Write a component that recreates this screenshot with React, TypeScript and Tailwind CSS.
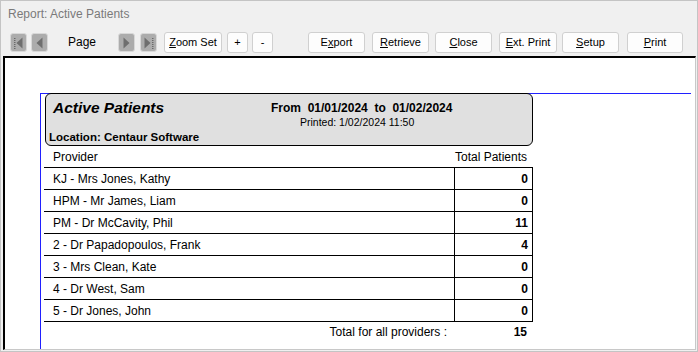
import React from "react";

type Row = { name: string; total: number };

const rows: Row[] = [
  { name: "KJ - Mrs Jones, Kathy", total: 0 },
  { name: "HPM - Mr James, Liam", total: 0 },
  { name: "PM - Dr McCavity, Phil", total: 11 },
  { name: "2 - Dr Papadopoulos, Frank", total: 4 },
  { name: "3 - Mrs Clean, Kate", total: 0 },
  { name: "4 - Dr West, Sam", total: 0 },
  { name: "5 - Dr Jones, John", total: 0 },
];

function DottedBar({ x }: { x: number }) {
  return (
    <g>
      {[4, 6, 8, 10, 12, 14].map((y) => (
        <rect key={y} x={x} y={y} width={1.5} height={1} fill="#6a6a6a" />
      ))}
    </g>
  );
}

function NavButton({ kind, className = "" }: { kind: "first" | "prev" | "next" | "last"; className?: string }) {
  return (
    <div
      className={`w-[17px] h-[19px] rounded-[3px] border border-[#d8d8d8] bg-[#acacac] flex items-center justify-center ${className}`}
    >
      <svg width="15" height="17" viewBox="0 0 15 17">
        {kind === "first" && (
          <>
            <DottedBar x={3} />
            <polygon points="11.5,3.5 11.5,14.5 5.5,9" fill="#6e6e6e" />
          </>
        )}
        {kind === "prev" && <polygon points="10.5,3.5 10.5,14.5 4.5,9" fill="#6e6e6e" />}
        {kind === "next" && <polygon points="4.5,3.5 4.5,14.5 10.5,9" fill="#6e6e6e" />}
        {kind === "last" && (
          <>
            <polygon points="3.5,3.5 3.5,14.5 9.5,9" fill="#6e6e6e" />
            <DottedBar x={11} />
          </>
        )}
      </svg>
    </div>
  );
}

function Btn({ children, className = "" }: { children: React.ReactNode; className?: string }) {
  return (
    <div
      className={`h-[21px] rounded-[3px] border border-[#d0d0d0] bg-[#fdfdfd] flex items-center justify-center text-[11px] text-black ${className}`}
    >
      {children}
    </div>
  );
}

export default function App() {
  const total = rows.reduce((s, r) => s + r.total, 0);
  return (
    <div
      className="w-[698px] h-[352px] bg-[#f0f0f0] border border-[#c4c4c4] flex flex-col overflow-hidden"
      style={{ fontFamily: '"Liberation Sans", Arial, sans-serif' }}
    >
      {/* title */}
      <div className="h-[26px] shrink-0 pl-[7px] flex items-center text-[12px] text-[#7a7a7a]">
        Report: Active Patients
      </div>

      {/* toolbar */}
      <div className="h-[29px] shrink-0 pt-[5px] flex items-start">
        <NavButton kind="first" className="ml-[9px] mt-[1px]" />
        <NavButton kind="prev" className="ml-[4px] mt-[1px]" />
        <span className="ml-[20px] w-[50px] text-[12px] leading-[21px] text-black">Page</span>
        <NavButton kind="next" className="mt-[1px]" />
        <NavButton kind="last" className="ml-[5px] mt-[1px]" />
        <Btn className="ml-[7px] w-[58px]">
          <span className="underline">Z</span>oom Set
        </Btn>
        <Btn className="ml-[5px] w-[21px]">+</Btn>
        <Btn className="ml-[4px] w-[21px]">-</Btn>
        <Btn className="ml-[35px] w-[57px]">
          E<span className="underline">x</span>port
        </Btn>
        <Btn className="ml-[7px] w-[57px]">
          <span className="underline">R</span>etrieve
        </Btn>
        <Btn className="ml-[6px] w-[57px]">
          <span className="underline">C</span>lose
        </Btn>
        <Btn className="ml-[7px] w-[58px]">
          <span className="underline">E</span>xt. Print
        </Btn>
        <Btn className="ml-[5px] w-[57px]">
          <span className="underline">S</span>etup
        </Btn>
        <Btn className="ml-[8px] w-[56px]">
          <span className="underline">P</span>rint
        </Btn>
      </div>

      {/* preview area */}
      <div className="flex-1 ml-[2px] mr-[1px] mb-[1px] bg-white border-t-2 border-l-2 border-t-black border-l-black border-r border-b border-r-[#c8c8c8] border-b-[#c8c8c8] pt-[35px] pl-[35px] flex flex-col min-h-0">
        <div className="flex-1 mr-[4px] border-l border-l-[#2020ff] flex flex-col text-black">
          <div className="h-px shrink-0 bg-[#2020ff]" />
          {/* header box */}
          <div className="-mt-[1px] ml-[4px] w-[488px] h-[53px] rounded-[6px] border border-black bg-[#e0e0e0] flex flex-col">
            <div className="flex pt-[5px] pl-[7px]">
              <span className="w-[218px] text-[15.5px] leading-[18px] font-bold italic">Active Patients</span>
              <div className="flex flex-col items-start mt-[2px]">
                <span className="text-[12px] leading-[14px] font-bold whitespace-pre">
                  {"From  01/01/2024  to  01/02/2024"}
                </span>
                <span className="ml-[29px] mt-[1px] text-[10.5px] leading-[13px]">Printed: 1/02/2024 11:50</span>
              </div>
            </div>
            <div className="mt-auto pl-[3px] pb-[1px] text-[11.5px] leading-[13px] font-bold">
              Location: Centaur Software
            </div>
          </div>

          {/* table */}
          <div className="ml-[3px] w-[489px] text-[12px]">
            <div className="h-[21px] flex items-center">
              <span className="w-[410px] pl-[9px]">Provider</span>
              <span className="w-[79px] text-right pr-[6px]">Total Patients</span>
            </div>
            <div className="border-b border-black">
              {rows.map((r) => (
                <div key={r.name} className="h-[22px] border-t border-black flex">
                  <div className="w-[410px] pl-[9px] flex items-center">{r.name}</div>
                  <div className="w-[79px] border-l border-r border-black flex items-center justify-end pr-[4px] font-bold">
                    {r.total}
                  </div>
                </div>
              ))}
            </div>
            <div className="h-[19px] flex items-center">
              <span className="w-[410px] text-right pr-[7px]">Total for all providers :</span>
              <span className="w-[79px] text-right pr-[6px] font-bold">{total}</span>
            </div>
          </div>
        </div>
      </div>
    </div>
  );
}
